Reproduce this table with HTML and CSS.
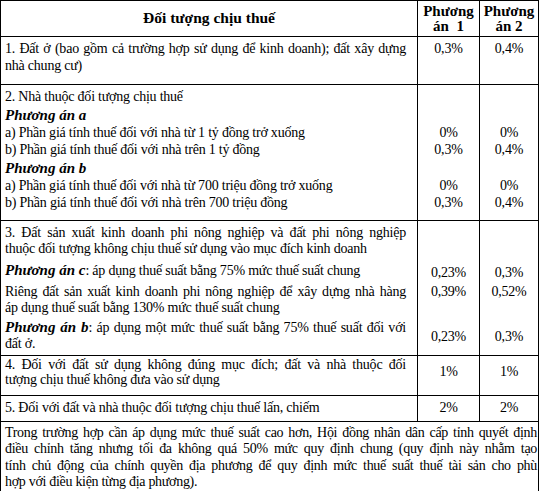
FILE: index.html
```html
<!DOCTYPE html>
<html lang="vi">
<head>
<meta charset="utf-8">
<link rel="stylesheet" href="styles.css">
</head>
<body>
<table class="tax">
  <colgroup>
    <col class="c1">
    <col class="c2">
    <col class="c3">
  </colgroup>
  <tr class="head">
    <th class="h-main">Đối tượng chịu thuế</th>
    <th class="h-opt">Phương<br>án&nbsp; 1</th>
    <th class="h-opt">Phương<br>án 2</th>
  </tr>
  <tr class="r1">
    <td class="txt">
      <span class="jl">1. Đất ở (bao gồm cả trường hợp sử dụng để kinh doanh); đất xây dựng</span>
      <span class="ll">nhà chung cư)</span>
    </td>
    <td class="num">0,3%</td>
    <td class="num">0,4%</td>
  </tr>
  <tr class="sub first">
    <td class="txt">2. Nhà thuộc đối tượng chịu thuế</td>
    <td class="num"></td>
    <td class="num"></td>
  </tr>
  <tr class="sub opt">
    <td class="txt"><b class="pa">Phương án a</b></td>
    <td class="num"></td>
    <td class="num"></td>
  </tr>
  <tr class="sub">
    <td class="txt">a) Phần giá tính thuế đối với nhà từ 1 tỷ đồng trở xuống</td>
    <td class="num">0%</td>
    <td class="num">0%</td>
  </tr>
  <tr class="sub">
    <td class="txt">b) Phần giá tính thuế đối với nhà trên 1 tỷ đồng</td>
    <td class="num">0,3%</td>
    <td class="num">0,4%</td>
  </tr>
  <tr class="sub opt">
    <td class="txt"><b class="pa">Phương án b</b></td>
    <td class="num"></td>
    <td class="num"></td>
  </tr>
  <tr class="sub">
    <td class="txt">a) Phần giá tính thuế đối với nhà từ 700 triệu đồng trở xuống</td>
    <td class="num">0%</td>
    <td class="num">0%</td>
  </tr>
  <tr class="sub last">
    <td class="txt">b) Phần giá tính thuế đối với nhà trên 700 triệu đồng</td>
    <td class="num">0,3%</td>
    <td class="num">0,4%</td>
  </tr>
  <tr class="sub3 s3a">
    <td class="txt">
      <span class="jl">3. Đất sản xuất kinh doanh phi nông nghiệp và đất phi nông nghiệp</span>
      <span class="ll">thuộc đối tượng không chịu thuế sử dụng vào mục đích kinh doanh</span>
    </td>
    <td class="num"></td>
    <td class="num"></td>
  </tr>
  <tr class="sub3 s3b">
    <td class="txt"><b class="pa">Phương án c</b>: áp dụng thuế suất bằng 75% mức thuế suất chung</td>
    <td class="num">0,23%</td>
    <td class="num">0,3%</td>
  </tr>
  <tr class="sub3 s3c">
    <td class="txt">
      <span class="jl">Riêng đất sản xuất kinh doanh phi nông nghiệp để xây dựng nhà hàng</span>
      <span class="ll">áp dụng thuế suất bằng 130% mức thuế suất chung</span>
    </td>
    <td class="num">0,39%</td>
    <td class="num">0,52%</td>
  </tr>
  <tr class="sub3 s3d">
    <td class="txt">
      <span class="jl"><b class="pa">Phương án b</b>: áp dụng một mức thuế suất bằng 75% thuế suất đối với</span>
      <span class="ll">đất ở.</span>
    </td>
    <td class="num mid">0,23%</td>
    <td class="num mid">0,3%</td>
  </tr>
  <tr class="r4">
    <td class="txt">
      <span class="jl">4. Đối với đất sử dụng không đúng mục đích; đất và nhà thuộc đối</span>
      <span class="ll">tượng chịu thuế không đưa vào sử dụng</span>
    </td>
    <td class="num">1%</td>
    <td class="num">1%</td>
  </tr>
  <tr class="r5">
    <td class="txt">5. Đối với đất và nhà thuộc đối tượng chịu thuế lấn, chiếm</td>
    <td class="num">2%</td>
    <td class="num">2%</td>
  </tr>
  <tr class="foot">
    <td class="txt" colspan="3">
      <span class="jl">Trong trường hợp cần áp dụng mức thuế suất cao hơn, Hội đồng nhân dân cấp tỉnh quyết định</span>
      <span class="jl">điều chỉnh tăng nhưng tối đa không quá 50% mức quy định chung (quy định này nhằm tạo</span>
      <span class="jl">tính chủ động của chính quyền địa phương để quy định mức thuế suất thuế tài sản cho phù</span>
      <span class="ll">hợp với điều kiện từng địa phương).</span>
    </td>
  </tr>
</table>
</body>
</html>
```

FILE: styles.css
```css
html, body {
  margin: 0;
  padding: 0;
  background: #ffffff;
}

body {
  font-family: "Liberation Serif", "Times New Roman", serif;
  font-size: 14px;
  letter-spacing: -0.22px;
  color: #000000;
}

.tax {
  border-collapse: collapse;
  table-layout: fixed;
  width: 538px;
}

.c1 { width: 417px; }
.c2 { width: 62px; }
.c3 { width: 59px; }

.tax th,
.tax td {
  border: 1px solid #000000;
  padding: 0 11px 0 4px;
  vertical-align: top;
  line-height: 16.5px;
}

.tax .num {
  text-align: center;
  padding-left: 0;
  padding-right: 0;
}

/* header */
.tax .head th {
  font-weight: bold;
  text-align: center;
  height: 35px;
  box-sizing: border-box;
  letter-spacing: 0;
}

.tax .head .h-main {
  vertical-align: middle;
  padding: 0;
  font-size: 15.5px;
}

.tax .head .h-opt {
  padding: 3px 0 2px 0;
  line-height: 15px;
  font-size: 15px;
}

.txt {
  text-align: left;
}

.pa {
  font-weight: bold;
  font-style: italic;
  font-size: 15px;
  line-height: 15px;
  letter-spacing: 0;
}

.jl,
.ll {
  display: block;
}

.jl {
  text-align: justify;
  text-align-last: justify;
}

.tax .mid {
  vertical-align: middle;
}

/* row 1 */
.tax .r1 td {
  padding-top: 2.5px;
  padding-bottom: 10px;
  line-height: 17px;
}

/* row 2: stacked lines inside one bordered block */
.tax .sub td,
.tax .sub3 td {
  border-top: none;
  border-bottom: none;
}

.tax .sub td {
  padding-top: 0.5px;
  line-height: 16.5px;
}

.tax .sub.opt td {
  padding-top: 2.5px;
}

.tax .sub.first td {
  padding-top: 4px;
  border-top: 1px solid #000000;
}

.tax .sub.last td {
  padding-bottom: 9px;
  border-bottom: 1px solid #000000;
}

/* row 3 */
.tax .sub3 td {
  line-height: 16px;
}

.tax .s3a td {
  border-top: 1px solid #000000;
  padding-top: 4px;
}

.tax .s3b td {
  padding-top: 6px;
}

.tax .s3b .num {
  padding-top: 7.5px;
}

.tax .s3c td {
  padding-top: 3px;
}

.tax .s3d td {
  padding-top: 4px;
  padding-bottom: 3.5px;
  border-bottom: 1px solid #000000;
}

.tax .s3d .num {
  padding-top: 3px;
  padding-bottom: 0;
}

/* row 4 */
.tax .r4 td {
  padding-top: 0.5px;
  padding-bottom: 8.5px;
  line-height: 15px;
}

.tax .r4 .num {
  padding-top: 7.5px;
  padding-bottom: 0;
}

/* row 5 */
.tax .r5 td {
  padding-top: 2.5px;
  padding-bottom: 5.5px;
  line-height: 17px;
}

/* footer note */
.tax .foot td {
  padding: 3px 1px 3px 4px;
  line-height: 16.33px;
  letter-spacing: -0.3px;
}
```
